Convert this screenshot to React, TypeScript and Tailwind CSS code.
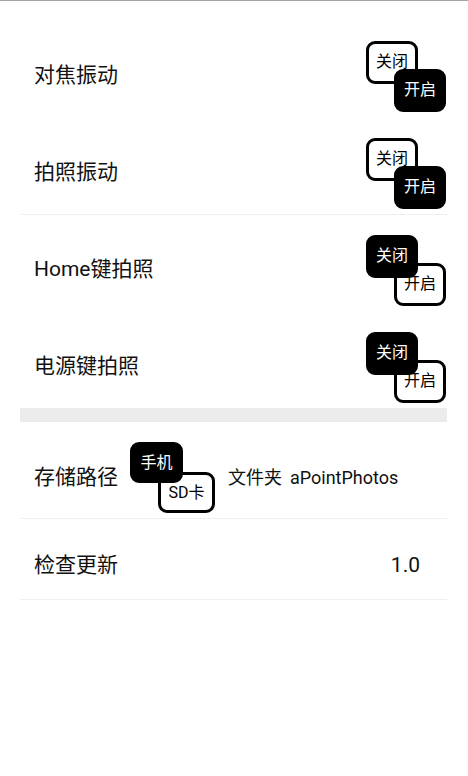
import React from 'react';

const font = { fontFamily: 'Roboto, "Noto Sans CJK SC", sans-serif' };

type ToggleProps = {
  first: string;
  second: string;
  active: 0 | 1;
  w?: string;
  boxA?: string;
  boxB?: string;
};

function Box({ label, on, className }: { label: string; on: boolean; className: string }) {
  return (
    <div
      className={
        'col-start-1 row-start-1 flex items-center justify-center rounded-[9px] border-[3px] border-black text-[16px] leading-none ' +
        (on ? 'bg-black text-white z-10 ' : 'bg-white text-black ') +
        className
      }
    >
      {label}
    </div>
  );
}

function Toggle({ first, second, active, w = 'w-[80px]', boxA = 'w-[52px] h-[43px]', boxB = 'w-[52px] h-[43px]' }: ToggleProps) {
  return (
    <div className={'grid h-[71px] ' + w}>
      <Box label={first} on={active === 0} className={'self-start justify-self-start ' + boxA} />
      <Box label={second} on={active === 1} className={'self-end justify-self-end ' + boxB} />
    </div>
  );
}

function SwitchRow({ title, on, divider }: { title: string; on: boolean; divider?: boolean }) {
  return (
    <div
      className={
        'flex items-center justify-between pl-[14px] pr-[1px] ' +
        (divider ? 'h-[83px] border-b border-[#efefef]' : 'h-[82px]')
      }
    >
      <span className="text-[21px] text-[#111]">{title}</span>
      <Toggle first="关闭" second="开启" active={on ? 1 : 0} />
    </div>
  );
}

export default function App() {
  return (
    <div className="min-h-screen bg-white" style={font}>
      <div className="h-px bg-[#a3a3a3]" />
      <div className="ml-[20px] mr-[21px] flex flex-col pt-[34px]">
        <div className="flex flex-col gap-[15px]">
          <SwitchRow title="对焦振动" on />
          <SwitchRow title="拍照振动" on divider />
        </div>
        <div className="mt-[14px] flex flex-col gap-[15px]">
          <SwitchRow title="Home键拍照" on={false} />
          <SwitchRow title="电源键拍照" on={false} />
        </div>
        <div className="h-[14px] bg-[#ebebeb]" />

        <div className="mt-[15px] flex h-[82px] items-center border-b border-[#efefef] pl-[14px]">
          <span className="text-[21px] text-[#111]">存储路径</span>
          <div className="ml-[12px]">
            <Toggle first="手机" second="SD卡" active={0} w="w-[85px]" boxA="w-[53px] h-[41px]" boxB="w-[57px] h-[41px]" />
          </div>
          <span className="ml-[13px] text-[18px] text-[#111]">文件夹</span>
          <span className="ml-[8px] text-[18px] text-[#111]">aPointPhotos</span>
        </div>

        <div className="flex h-[81px] items-center justify-between border-b border-[#efefef] pl-[14px] pr-[27px] pt-[14px]">
          <span className="text-[21px] text-[#111]">检查更新</span>
          <span className="text-[21px] text-[#111]">1.0</span>
        </div>
      </div>
    </div>
  );
}
